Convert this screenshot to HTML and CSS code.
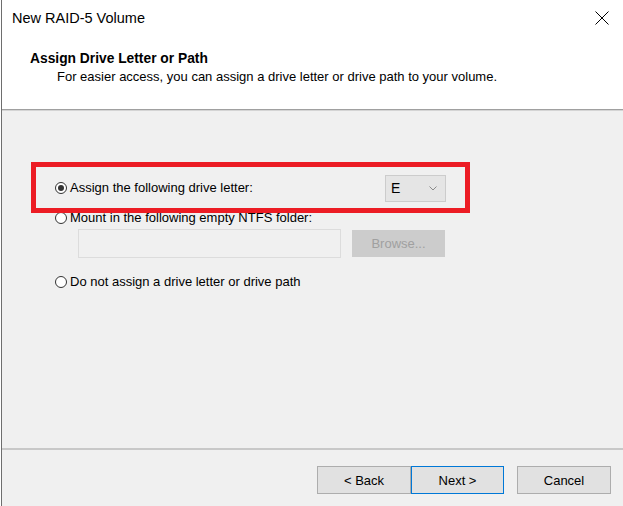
FILE: index.html
```html
<!DOCTYPE html>
<html>
<head>
<meta charset="utf-8">
<link rel="stylesheet" href="styles.css">
</head>
<body>
<div class="window">
  <div class="top">
    <div class="titlebar">
      <span class="title">New RAID-5 Volume</span>
      <svg class="close" width="14" height="14" viewBox="0 0 14 14"><path d="M0.5 0.5 L13.5 13.5 M13.5 0.5 L0.5 13.5" stroke="#000" stroke-width="1" fill="none"/></svg>
    </div>
    <div class="header">
      <div class="heading">Assign Drive Letter or Path</div>
      <div class="subtitle">For easier access, you can assign a drive letter or drive path to your volume.</div>
    </div>
  </div>
  <div class="main">
    <div class="options">
      <div class="row row-first">
        <span class="radio checked"></span>
        <span class="label label-first">Assign the following drive letter:</span>
        <div class="combo">
          <span class="combo-value">E</span>
          <svg class="chevron" width="8" height="5" viewBox="0 0 8 5"><path d="M0.5 0.5 L4 4 L7.5 0.5" stroke="#8a8a8a" stroke-width="1" fill="none"/></svg>
        </div>
        <div class="highlight"></div>
      </div>
      <div class="row">
        <span class="radio"></span>
        <span class="label">Mount in the following empty NTFS folder:</span>
      </div>
      <div class="folder-row">
        <div class="textbox"></div>
        <div class="btn btn-disabled">Browse...</div>
      </div>
      <div class="row row-last">
        <span class="radio"></span>
        <span class="label">Do not assign a drive letter or drive path</span>
      </div>
    </div>
  </div>
  <div class="footer">
    <div class="btn btn-back">&lt; Back</div>
    <div class="btn btn-next">Next &gt;</div>
    <div class="btn btn-cancel">Cancel</div>
  </div>
</div>
</body>
</html>
```

FILE: styles.css
```css
html, body {
  margin: 0;
  padding: 0;
  background: #ffffff;
  font-family: "Liberation Sans", Arial, sans-serif;
  color: #000;
  overflow: hidden;
}

.window {
  margin-left: 1px;
  border-left: 1px solid #6e6e6e;
  width: 622px;
  height: 506px;
  box-sizing: border-box;
  display: flex;
  flex-direction: column;
}

.top {
  background: #ffffff;
  border-bottom: 1px solid #a0a0a0;
}

.titlebar {
  height: 36px;
  display: flex;
  align-items: center;
  padding-left: 10px;
}

.title {
  font-size: 14.5px;
  line-height: 36px;
}

.close {
  margin-left: auto;
  margin-right: 14px;
  display: block;
}

.header {
  height: 73px;
  box-sizing: border-box;
  padding: 14px 0 0 28px;
}

.heading {
  font-weight: bold;
  font-size: 13.8px;
  line-height: 17px;
}

.subtitle {
  font-size: 13px;
  line-height: 16px;
  margin-top: 2px;
  margin-left: 27px;
}

.main {
  background: #f0f0f0;
  border-top: 1px solid #d4d4d4;
  height: 338px;
  box-sizing: border-box;
  padding: 63px 0 0 53px;
}

.options {
  display: flex;
  flex-direction: column;
}

.row {
  display: flex;
  align-items: center;
  height: 16px;
  font-size: 13px;
  line-height: 16px;
  margin-top: 8px;
}

.row-first {
  position: relative;
  height: 28px;
  margin-top: 0;
}

.row-last {
  margin-top: 16px;
}

.radio {
  width: 12px;
  height: 12px;
  box-sizing: border-box;
  border: 1px solid #333333;
  border-radius: 50%;
  background: #ffffff;
  display: flex;
  align-items: center;
  justify-content: center;
  flex: none;
}

.radio.checked::after {
  content: "";
  width: 6px;
  height: 6px;
  border-radius: 50%;
  background: #333333;
}

.label {
  margin-left: 3px;
  white-space: nowrap;
}

.label-first {
  width: 315px;
}

.combo {
  width: 61px;
  height: 27px;
  box-sizing: border-box;
  border: 1px solid #cccccc;
  background: #e5e5e5;
  display: flex;
  align-items: center;
  padding: 0 8px 0 5px;
  flex: none;
}

.combo-value {
  font-size: 14px;
}

.chevron {
  margin-left: auto;
  display: block;
}

.highlight {
  position: absolute;
  left: -24px;
  top: -12px;
  width: 439px;
  height: 51px;
  box-sizing: border-box;
  border: 5px solid #ec1c24;
  pointer-events: none;
}

.folder-row {
  display: flex;
  align-items: center;
  gap: 11px;
  margin-top: 3px;
  padding-left: 23px;
}

.textbox {
  width: 263px;
  height: 29px;
  box-sizing: border-box;
  border: 1px solid #dcdcdc;
  background: #f0f0f0;
}

.btn {
  height: 28px;
  box-sizing: border-box;
  border: 1px solid #adadad;
  background: #e1e1e1;
  font-size: 13px;
  display: flex;
  align-items: center;
  justify-content: center;
  flex: none;
}

.btn-disabled {
  width: 93px;
  height: 27px;
  background: #cccccc;
  border-color: #cccccc;
  color: #a0a0a0;
}

.footer {
  flex: 1;
  background: #f0f0f0;
  border-top: 2px solid #c8c8c8;
  display: flex;
  justify-content: flex-end;
  align-items: flex-start;
  padding: 16px 12px 0 0;
}

.btn-back {
  width: 94px;
}

.btn-next {
  width: 93px;
  border-color: #0078d7;
}

.btn-cancel {
  width: 94px;
  margin-left: 13px;
}
```
